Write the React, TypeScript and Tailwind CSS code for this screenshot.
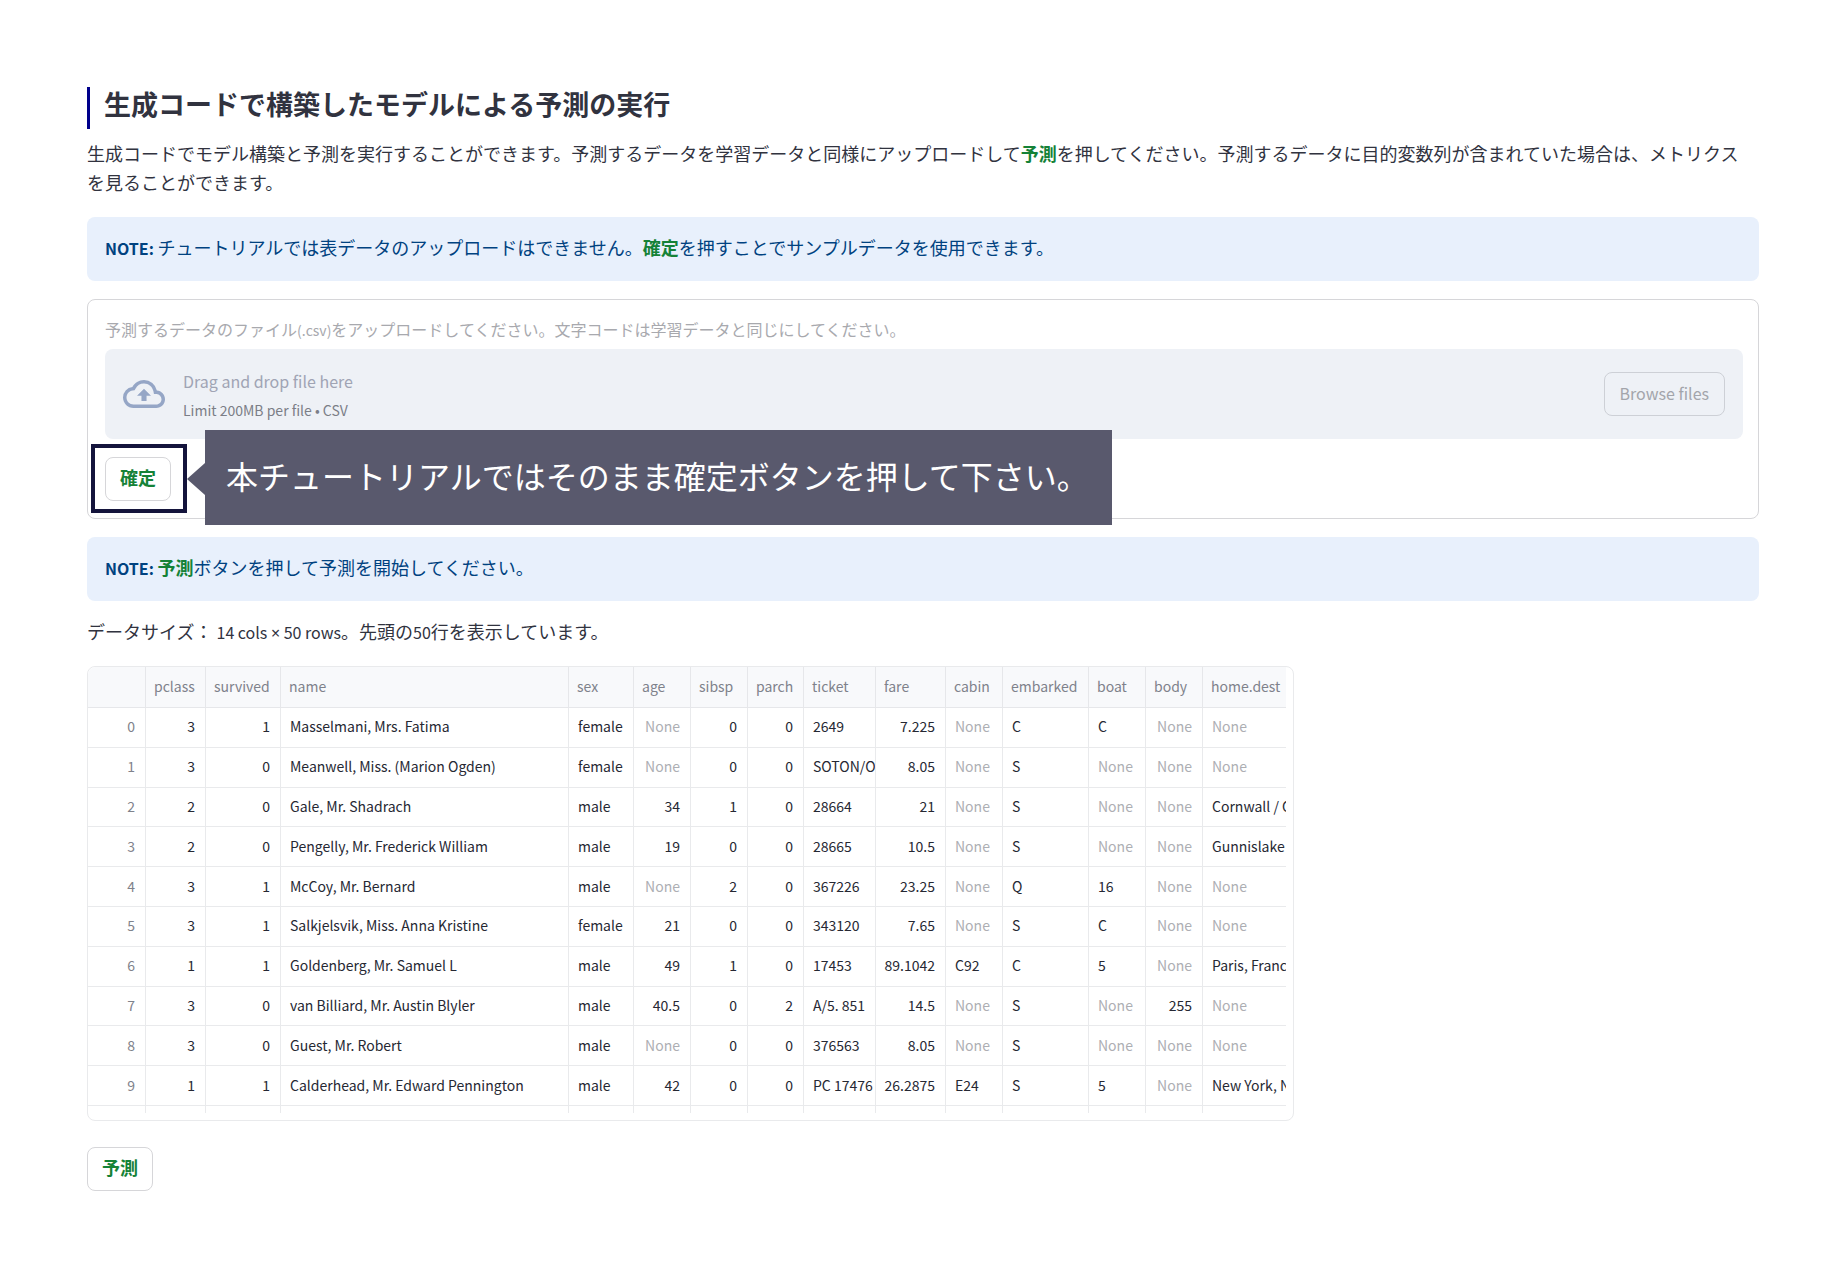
import React from 'react';
import { MdOutlineCloudUpload } from 'react-icons/md';

type Cell = string | null;

// w: column width in px, num: right aligned column
const columns = [
  { name: 'pclass', w: 'w-[60px]', num: true },
  { name: 'survived', w: 'w-[75px]', num: true },
  { name: 'name', w: 'w-[288px]', num: false },
  { name: 'sex', w: 'w-[65px]', num: false },
  { name: 'age', w: 'w-[57px]', num: true },
  { name: 'sibsp', w: 'w-[57px]', num: true },
  { name: 'parch', w: 'w-[56px]', num: true },
  { name: 'ticket', w: 'w-[72px]', num: false },
  { name: 'fare', w: 'w-[70px]', num: true },
  { name: 'cabin', w: 'w-[57px]', num: false },
  { name: 'embarked', w: 'w-[86px]', num: false },
  { name: 'boat', w: 'w-[57px]', num: false },
  { name: 'body', w: 'w-[57px]', num: true },
  { name: 'home.dest', w: 'w-[120px]', num: false },
];

const rows: Cell[][] = [
  ['3', '1', 'Masselmani, Mrs. Fatima', 'female', null, '0', '0', '2649', '7.225', null, 'C', 'C', null, null],
  ['3', '0', 'Meanwell, Miss. (Marion Ogden)', 'female', null, '0', '0', 'SOTON/O', '8.05', null, 'S', null, null, null],
  ['2', '0', 'Gale, Mr. Shadrach', 'male', '34', '1', '0', '28664', '21', null, 'S', null, null, 'Cornwall / C'],
  ['2', '0', 'Pengelly, Mr. Frederick William', 'male', '19', '0', '0', '28665', '10.5', null, 'S', null, null, 'Gunnislake'],
  ['3', '1', 'McCoy, Mr. Bernard', 'male', null, '2', '0', '367226', '23.25', null, 'Q', '16', null, null],
  ['3', '1', 'Salkjelsvik, Miss. Anna Kristine', 'female', '21', '0', '0', '343120', '7.65', null, 'S', 'C', null, null],
  ['1', '1', 'Goldenberg, Mr. Samuel L', 'male', '49', '1', '0', '17453', '89.1042', 'C92', 'C', '5', null, 'Paris, Franc'],
  ['3', '0', 'van Billiard, Mr. Austin Blyler', 'male', '40.5', '0', '2', 'A/5. 851', '14.5', null, 'S', null, '255', null],
  ['3', '0', 'Guest, Mr. Robert', 'male', null, '0', '0', '376563', '8.05', null, 'S', null, null, null],
  ['1', '1', 'Calderhead, Mr. Edward Pennington', 'male', '42', '0', '0', 'PC 17476', '26.2875', 'E24', 'S', '5', null, 'New York, N'],
];

const Keyword: React.FC<{ children: React.ReactNode }> = ({ children }) => (
  <strong className="font-bold text-[#158237]">{children}</strong>
);

const Note: React.FC<{ children: React.ReactNode }> = ({ children }) => (
  <div className="rounded-lg bg-[#e8f0fc] px-[18px] pt-4 pb-5 leading-[28px] text-[#004280]">
    <strong className="text-base font-bold">NOTE: </strong>
    {children}
  </div>
);

const OutlineButton: React.FC<{ children: React.ReactNode }> = ({ children }) => (
  <button type="button" className="h-11 rounded-lg border border-[#d6d6d9] bg-white px-[14px] pb-[3px]">
    <Keyword>{children}</Keyword>
  </button>
);

const UploadForm: React.FC = () => (
  <form className="mt-[18px] rounded-lg border border-[#d6d6d9] py-[17px] pr-[15px] pl-[17px]">
    <label htmlFor="csv" className="block text-base leading-[25px] text-[#a8a9ae]">
      予測するデータのファイル<span className="text-sm">(.csv)</span>をアップロードしてください。文字コードは学習データと同じにしてください。
    </label>
    <div className="mt-[7px] flex h-[90px] items-center rounded-lg bg-[#eef1f6] px-[18px]">
      <input id="csv" type="file" accept=".csv" disabled className="sr-only" />
      <MdOutlineCloudUpload size={42} className="text-[#95a6c6]" />
      <div className="ml-[18px] flex-1 pt-1">
        <div className="text-base leading-[29px] text-[#a0a4b4]">Drag and drop file here</div>
        <div className="text-sm leading-[29px] text-[#7b7e87]">Limit 200MB per file • CSV</div>
      </div>
      <button type="button" disabled className="h-11 rounded-lg border border-[#cdd0d6] px-[15px] pb-[2px] text-base text-[#a3a5ab]">
        Browse files
      </button>
    </div>
    <div className="relative mt-[18px] w-fit">
      <OutlineButton>確定</OutlineButton>
      {/* Tutorial highlight and callout */}
      <div className="pointer-events-none absolute -top-[13px] -right-4 -bottom-3 -left-[14px] border-4 border-[#14143c]" />
      <div className="absolute -top-[27px] left-[100px] flex h-[95px] items-center bg-[#59596d] pr-[23px] pb-1 pl-[21px] text-[32px] whitespace-nowrap text-white">
        <svg className="absolute top-[33px] -left-[18px]" width="18" height="32" viewBox="0 0 18 32" fill="#59596d">
          <path d="M18 0 0 16l18 16z" />
        </svg>
        本チュートリアルではそのまま確定ボタンを押して下さい。
      </div>
    </div>
  </form>
);

const DataTable: React.FC = () => (
  <div className="mt-[19px] h-[455px] w-[1207px] max-w-full rounded-lg border border-[#e9eaec] pr-[7px] pb-[7px]">
    <div className="h-full overflow-hidden rounded-tl-lg">
      <table className="h-full w-[1235px] table-fixed border-separate border-spacing-0 text-sm text-[#262833]">
        <thead>
          <tr className="h-[41px] bg-[#f8f9fb] text-left text-[#7f828b]">
            <th className="w-[58px] border-r border-b border-[#e6e7ea]" />
            {columns.map((col) => (
              <th key={col.name} className={`${col.w} border-r border-b border-[#e6e7ea] pb-[2px] pl-2 font-normal`}>
                {col.name}
              </th>
            ))}
          </tr>
        </thead>
        <tbody>
          {rows.map((row, i) => (
            <tr key={i}>
              <td className="border-r border-b border-[#e9eaec] pr-[10px] pb-[2px] text-right text-[#7f828b]">{i}</td>
              {row.map((cell, j) => (
                <td
                  key={j}
                  className={`overflow-hidden border-r border-b border-[#e9eaec] pb-[2px] whitespace-nowrap ${
                    columns[j].num ? 'pr-[10px] text-right' : 'pl-[9px]'
                  } ${cell === null ? 'text-[#adaeb3]' : ''}`}
                >
                  {cell ?? 'None'}
                </td>
              ))}
            </tr>
          ))}
          {/* Top of the next row, cut off by the frame */}
          <tr className="h-[7px]">
            {Array.from({ length: columns.length + 1 }, (_, j) => (
              <td key={j} className="border-r border-[#e9eaec]" />
            ))}
          </tr>
        </tbody>
      </table>
    </div>
  </div>
);

const App: React.FC = () => {
  return (
    <main className="min-h-screen bg-white px-[87px] py-[87px] font-['Noto_Sans_CJK_JP',sans-serif] text-lg leading-[29px] text-[#31333f]">
      <h2 className="border-l-[3px] border-[#00008b] pb-2 pl-[14px] text-[27px] leading-[34px] font-bold">
        生成コードで構築したモデルによる予測の実行
      </h2>
      <p className="mt-[10px] mb-5 pr-4 leading-[29px]">
        生成コードでモデル構築と予測を実行することができます。予測するデータを学習データと同様にアップロードして<Keyword>予測</Keyword>を押してください。予測するデータに目的変数列が含まれていた場合は、メトリクスを見ることができます。
      </p>
      <Note>
        チュートリアルでは表データのアップロードはできません。<Keyword>確定</Keyword>を押すことでサンプルデータを使用できます。
      </Note>
      <UploadForm />
      <div className="mt-[18px]">
        <Note>
          <Keyword>予測</Keyword>ボタンを押して予測を開始してください。
        </Note>
      </div>
      <p className="mt-4 mb-5 leading-[29px]">
        データサイズ： <span className="text-base">14 cols <span className="font-['Noto_Sans']">×</span> 50 rows</span>。先頭の<span className="text-base">50</span>行を表示しています。
      </p>
      <DataTable />
      <div className="mt-[26px]">
        <OutlineButton>予測</OutlineButton>
      </div>
    </main>
  );
};

export default App;
